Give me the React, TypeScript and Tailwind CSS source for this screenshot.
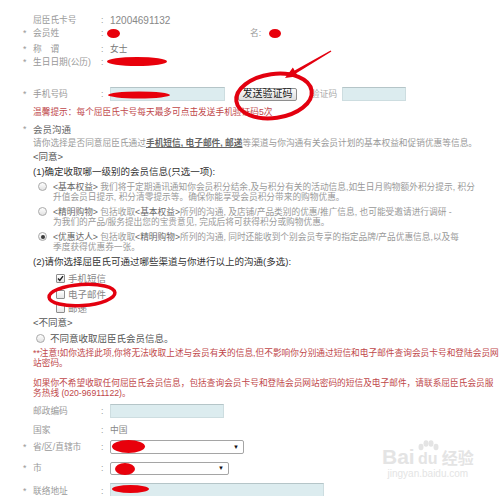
import React from "react";

function Field({
  star,
  label,
  className,
  children,
}: {
  star?: boolean;
  label: string;
  className: string;
  children?: React.ReactNode;
}) {
  return (
    <div className={`flex items-center ${className}`}>
      <span className="w-[33px] pl-[23px] text-[#999]">{star ? "*" : ""}</span>
      <span className="w-[68px] whitespace-nowrap text-[#999]">{label}</span>
      <span className="w-[9px] text-[#999]">:</span>
      <div className="flex flex-1 items-center whitespace-nowrap">{children}</div>
    </div>
  );
}

function Radio({ checked }: { checked?: boolean }) {
  return (
    <span className="flex h-[9px] w-[9px] shrink-0 items-center justify-center rounded-full border border-[#a9a9a9] bg-gradient-to-b from-white to-[#e2e2e2]">
      {checked && <span className="h-[4px] w-[4px] rounded-full bg-[#3a3a3a]" />}
    </span>
  );
}

function Check({ checked }: { checked?: boolean }) {
  return (
    <span className="flex h-[9px] w-[9px] shrink-0 items-center justify-center rounded-[1px] border border-[#8f8f8f] bg-gradient-to-b from-white to-[#e6e6e6]">
      {checked && (
        <svg width="7" height="7" viewBox="0 0 7 7">
          <path d="M1 3.6 L2.8 5.4 L6 1.2" stroke="#222" strokeWidth="1.4" fill="none" />
        </svg>
      )}
    </span>
  );
}

const inputBox = "border border-[#cddde0] border-t-[#b5c5c8] bg-[#dcecef]";

export default function App() {
  return (
    <div className="relative h-[496px] w-[500px] overflow-hidden bg-white font-['Liberation_Sans','Noto_Sans_CJK_SC',sans-serif] text-[8.7px] leading-[9px] text-[#999]">
      <div className="flex flex-col">
        <Field label="屈臣氏卡号" className="mt-[14px] h-[12px]">
          <span className="text-[10px] text-[#888]">12004691132</span>
        </Field>
        <Field star label="会员姓" className="mt-[1px] h-[12px]">
          <span className="ml-[140px] text-[#999]">名:</span>
        </Field>
        <Field star label={"称\u3000谓"} className="mt-[4px] h-[12px]">
          <span className="text-[#777]">女士</span>
        </Field>
        <Field star label="生日日期(公历)" className="mt-[1px] h-[12px]" />

        <Field star label="手机号码" className="mt-[19px] h-[14px]">
          <span className={`h-[14px] w-[115px] ${inputBox}`} />
          <button className="ml-[13px] flex h-[13px] w-[59px] items-center justify-center rounded-[2px] border border-[#8e8e8e] bg-gradient-to-b from-[#fbfbfb] to-[#dedede] text-[10px] leading-none text-[#222]">
            发送验证码
          </button>
          <span className="ml-[14px] text-[#aaa]">验证码</span>
          <span className={`ml-[5px] h-[14px] w-[64px] ${inputBox}`} />
        </Field>

        <div className="mt-[6px] h-[11px] whitespace-nowrap pl-[33px] leading-[11px] text-[#c0474a]">
          温馨提示：每个屈臣氏卡号每天最多可点击发送手机验证码5次
        </div>

        <div className="mt-[5px] flex h-[12px] items-center">
          <span className="w-[33px] pl-[23px] text-[#999]">*</span>
          <span className="text-[9.5px] text-[#666]">会员沟通</span>
        </div>
        <div className="mt-[2px] h-[12px] whitespace-nowrap pl-[33px] leading-[12px]">
          请你选择是否同意屈臣氏通过
          <b className="font-bold text-[#666] underline">手机短信, 电子邮件, 邮递</b>
          等渠道与你沟通有关会员计划的基本权益和促销优惠等信息。
        </div>
        <div className="mt-[2px] h-[12px] pl-[33px] text-[9.5px] leading-[12px] text-[#555]">&lt;同意&gt;</div>
        <div className="mt-[3px] h-[12px] whitespace-nowrap pl-[33px] text-[9.5px] leading-[12px] text-[#333]">
          (1)确定收取哪一级别的会员信息(只选一项):
        </div>

        <div className="mt-[4px] flex items-start gap-[6px] pl-[38px] leading-[10px]">
          <Radio />
          <div className="whitespace-nowrap">
            <span className="text-[#666]">&lt;基本权益&gt;</span> 我们将于定期通讯通知你会员积分结余,及与积分有关的活动信息,如生日月购物额外积分提示, 积分
            <br />
            升值会员日提示, 积分清零提示等。确保你能享受会员积分带来的购物优惠。
          </div>
        </div>
        <div className="mt-[5px] flex items-start gap-[6px] pl-[38px] leading-[10px]">
          <Radio />
          <div className="whitespace-nowrap">
            <span className="text-[#666]">&lt;精明购物&gt;</span> 包括收取<span className="text-[#666]">&lt;基本权益&gt;</span>所列的沟通, 及店铺/产品类别的优惠/推广信息, 也可能受邀请进行调研 -
            <br />
            为我们的产品/服务提出您的宝贵意见, 完成后将可获得积分或购物优惠。
          </div>
        </div>
        <div className="mt-[5px] flex items-start gap-[6px] pl-[38px] leading-[10px]">
          <Radio checked />
          <div className="whitespace-nowrap">
            <span className="text-[#666]">&lt;优惠达人&gt;</span> 包括收取<span className="text-[#666]">&lt;精明购物&gt;</span>所列的沟通, 同时还能收到个别会员专享的指定品牌/产品优惠信息,以及每
            <br />
            季度获得优惠券一张。
          </div>
        </div>

        <div className="mt-[4px] h-[12px] whitespace-nowrap pl-[33px] text-[9.5px] leading-[12px] text-[#333]">
          (2)请你选择屈臣氏可通过哪些渠道与你进行以上的沟通(多选):
        </div>
        <div className="mt-[4px] flex h-[12px] items-center gap-[3px] pl-[56px] text-[9.5px]">
          <Check checked />
          <span className="text-[#888]">手机短信</span>
        </div>
        <div className="mt-[4px] flex h-[12px] items-center gap-[3px] pl-[56px] text-[9.5px]">
          <Check />
          <span className="text-[#888]">电子邮件</span>
        </div>
        <div className="mt-[2px] flex h-[12px] items-center gap-[3px] pl-[56px] text-[9.5px]">
          <Check />
          <span className="text-[#888]">邮递</span>
        </div>
        <div className="mt-[3px] h-[12px] pl-[33px] text-[9.5px] leading-[12px] text-[#555]">&lt;不同意&gt;</div>
        <div className="mt-[3px] flex h-[12px] items-center gap-[5px] pl-[36px]">
          <Radio />
          <span className="text-[9.5px] text-[#555]">不同意收取屈臣氏会员信息。</span>
        </div>

        <div className="mt-[4px] whitespace-nowrap pl-[33px] leading-[10px] text-[#c0474a]">
          **注意!如你选择此项,你将无法收取上述与会员有关的信息,但不影响你分别通过短信和电子邮件查询会员卡号和登陆会员网
          <br />
          站密码。
        </div>
        <div className="mt-[10px] whitespace-nowrap pl-[33px] leading-[10px] text-[#c0474a]">
          如果你不希望收取任何屈臣氏会员信息，包括查询会员卡号和登陆会员网站密码的短信及电子邮件，请联系屈臣氏会员服
          <br />
          务热线 (020-96911122)。
        </div>

        <Field label="邮政编码" className="mt-[6px] h-[14px]">
          <span className={`h-[14px] w-[114px] ${inputBox}`} />
        </Field>
        <Field label="国家" className="mt-[6px] h-[12px]">
          <span className="text-[#888]">中国</span>
        </Field>
        <Field star label="省/区/直辖市" className="mt-[4px] h-[14px]">
          <span className="flex h-[14px] w-[134px] items-center justify-end rounded-[2px] border border-[#a5a5a5] bg-white pr-[4px] text-[6px] text-[#111]">
            ▼
          </span>
        </Field>
        <Field star label="市" className="mt-[8px] h-[13px]">
          <span className="flex h-[13px] w-[119px] items-center justify-end rounded-[2px] border border-[#a5a5a5] bg-white pr-[4px] text-[6px] text-[#111]">
            ▼
          </span>
        </Field>
        <Field star label="联络地址" className="mt-[8px] h-[16px]">
          <span className={`h-[16px] w-[214px] ${inputBox}`} />
        </Field>
      </div>

      {/* red marks drawn over the form */}
      <svg className="pointer-events-none absolute left-0 top-0" width="500" height="496" viewBox="0 0 500 496">
        <g fill="#e8000b">
          <ellipse cx="113.5" cy="33.5" rx="6.5" ry="4.5" />
          <ellipse cx="275" cy="33.5" rx="6" ry="4.5" />
          <ellipse cx="137" cy="61.5" rx="30" ry="4.5" />
          <ellipse cx="139" cy="95" rx="31" ry="3.5" />
          <ellipse cx="128.5" cy="446.5" rx="16.5" ry="6.5" />
          <ellipse cx="125" cy="469" rx="10" ry="6" />
          <ellipse cx="130.5" cy="489" rx="18.5" ry="4" />
        </g>
        <ellipse cx="274" cy="96" rx="38" ry="22" transform="rotate(-8 274 96)" fill="none" stroke="#e3000f" strokeWidth="4" />
        <ellipse cx="82" cy="295" rx="33" ry="10.5" transform="rotate(-4 82 295)" fill="none" stroke="#e3000f" strokeWidth="3.5" />
        <polygon
          points="331.4,51.6 296.2,73.2 297.9,76.2 285,78 292.9,67.6 294.6,70.6 330.6,50.4"
          fill="#e3000f"
        />
      </svg>

      {/* watermark */}
      <div className="pointer-events-none absolute left-[382px] top-[440px] flex flex-col items-center text-[#e4e4e4]">
        <div className="flex items-end font-['Liberation_Sans',sans-serif] text-[21px] font-bold leading-[21px]">
          <span>Bai</span>
          <span className="relative ml-[2px] flex flex-col items-center">
            <svg width="22" height="14" viewBox="0 0 22 14" className="mb-[-3px]">
              <g fill="#e4e4e4">
                <ellipse cx="4" cy="7" rx="2.5" ry="3.2" />
                <ellipse cx="9" cy="3.5" rx="2.5" ry="3.2" />
                <ellipse cx="14" cy="3.5" rx="2.5" ry="3.2" />
                <ellipse cx="19" cy="7" rx="2.5" ry="3.2" />
              </g>
            </svg>
            <span className="text-[16px] leading-[16px]">du</span>
          </span>
          <span className="ml-[3px] font-['Noto_Sans_CJK_SC',sans-serif] text-[16px] leading-[20px]">经验</span>
        </div>
        <div className="mt-[2px] font-['Liberation_Sans',sans-serif] text-[10px] leading-[10px]">jingyan.baidu.com</div>
      </div>
    </div>
  );
}
